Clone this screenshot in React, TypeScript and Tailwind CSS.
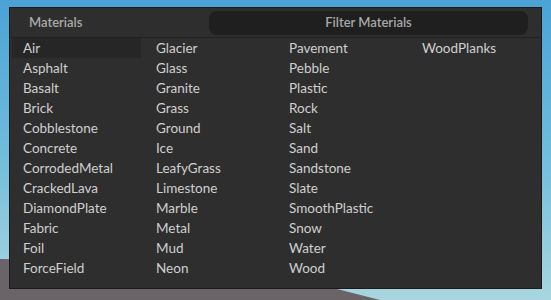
const COLUMNS = [
  ["Air", "Asphalt", "Basalt", "Brick", "Cobblestone", "Concrete", "CorrodedMetal", "CrackedLava", "DiamondPlate", "Fabric", "Foil", "ForceField"],
  ["Glacier", "Glass", "Granite", "Grass", "Ground", "Ice", "LeafyGrass", "Limestone", "Marble", "Metal", "Mud", "Neon"],
  ["Pavement", "Pebble", "Plastic", "Rock", "Salt", "Sand", "Sandstone", "Slate", "SmoothPlastic", "Snow", "Water", "Wood"],
  ["WoodPlanks"],
];

export default function App() {
  const selected = "Air";

  return (
    <div
      className="relative h-[300px] w-[551px] overflow-hidden bg-gradient-to-b from-[#4aa2d6] via-[#6fbcdc] to-[#a9d6df]"
      style={{ fontFamily: "Lato, 'Noto Sans', sans-serif" }}
    >
      {/* ground behind the panel */}
      <svg className="absolute inset-0" width="551" height="300" viewBox="0 0 551 300">
        <polygon points="0,259 232,262 380,300 0,300" fill="#6a6468" />
      </svg>

      <div className="relative ml-[9px] mt-[7px] w-[533px] border border-[#1b1b1b] bg-[#2e2e2e]">
        {/* Header */}
        <div className="flex h-[30px] items-center border-b border-[#222222]">
          <div className="w-[199px] pl-[19px] pt-[1px] text-[13px] font-semibold text-[#aaaaaa]">Materials</div>
          <div className="mr-[13px] flex h-[24px] flex-1 items-center justify-center rounded-lg bg-[#1f1f1f] pt-[1px] text-[13px] font-semibold text-[#a8a8a8]">
            Filter Materials
          </div>
        </div>

        {/* Material grid */}
        <div className="flex gap-[4px] pb-[10px] pl-[2px]">
          {COLUMNS.map((col, ci) => (
            <div key={ci} className="flex w-[129px] flex-col">
              {col.map((name) => (
                <div
                  key={name}
                  className={`flex h-[20px] items-center pl-[11px] pt-[1px] text-[13.5px] text-[#cfcfcf] ${name === selected ? "bg-[#262626]" : ""}`}
                >
                  {name}
                </div>
              ))}
            </div>
          ))}
        </div>
      </div>
    </div>
  );
}
